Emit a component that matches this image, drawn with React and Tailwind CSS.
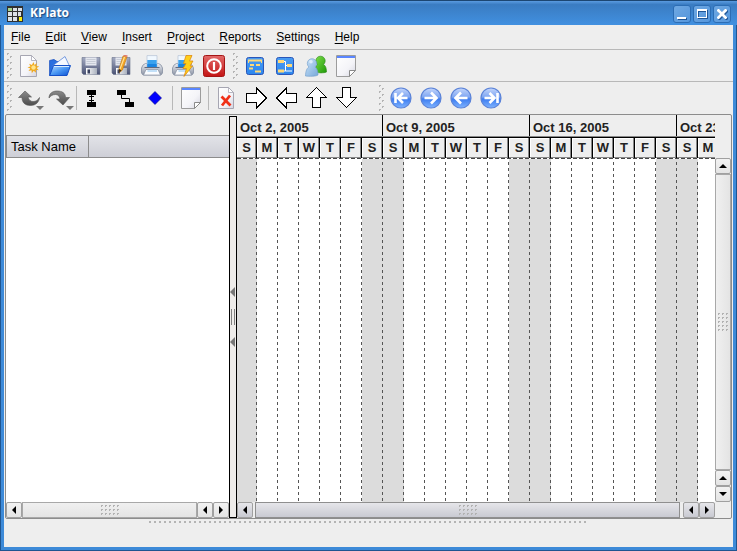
import React from "react";

const MENUS = ["File", "Edit", "View", "Insert", "Project", "Reports", "Settings", "Help"];

const DAYS = ["S", "M", "T", "W", "T", "F", "S"];

const WEEKS = [
  { label: "Oct 2, 2005", days: 7 },
  { label: "Oct 9, 2005", days: 7 },
  { label: "Oct 16, 2005", days: 7 },
  { label: "Oct 23, 2005", days: 2 },
];

/* ---------- icons ---------- */

function Icon({ children, size = "size-[22px]" }) {
  return (
    <svg viewBox="0 0 22 22" className={`${size} shrink-0`} aria-hidden="true">
      {children}
    </svg>
  );
}

function Gradients() {
  return (
    <svg className="absolute size-0" aria-hidden="true">
      <defs>
        <linearGradient id="paper" x1="0" y1="0" x2="1" y2="1">
          <stop offset="0" stopColor="#fff" />
          <stop offset=".6" stopColor="#f4f4f8" />
          <stop offset="1" stopColor="#d4d4e0" />
        </linearGradient>
        <linearGradient id="folder" x1="0" y1="0" x2="1" y2="1">
          <stop offset="0" stopColor="#b8dcff" />
          <stop offset=".5" stopColor="#4a98f4" />
          <stop offset="1" stopColor="#0a4fd0" />
        </linearGradient>
        <linearGradient id="disk" x1="0" y1="0" x2="0" y2="1">
          <stop offset="0" stopColor="#a4abc2" />
          <stop offset="1" stopColor="#4a5274" />
        </linearGradient>
        <linearGradient id="metal" x1="0" y1="0" x2="1" y2="0">
          <stop offset="0" stopColor="#fff" />
          <stop offset="1" stopColor="#a9b0bd" />
        </linearGradient>
        <linearGradient id="printer" x1="0" y1="0" x2="0" y2="1">
          <stop offset="0" stopColor="#eceef3" />
          <stop offset="1" stopColor="#8b93a4" />
        </linearGradient>
        <linearGradient id="red" x1="0" y1="0" x2="0" y2="1">
          <stop offset="0" stopColor="#e26a6a" />
          <stop offset="1" stopColor="#c41414" />
        </linearGradient>
        <linearGradient id="blueBox" x1="0" y1="0" x2="0" y2="1">
          <stop offset="0" stopColor="#4a9cf2" />
          <stop offset="1" stopColor="#2c86ee" />
        </linearGradient>
        <linearGradient id="ball" x1="0" y1="0" x2="0" y2="1">
          <stop offset="0" stopColor="#c4d6fb" />
          <stop offset=".45" stopColor="#7fa6f2" />
          <stop offset=".55" stopColor="#3d7cf0" />
          <stop offset="1" stopColor="#7fb4ff" />
        </linearGradient>
        <linearGradient id="green" x1="0" y1="0" x2="1" y2="1">
          <stop offset="0" stopColor="#7ede4a" />
          <stop offset="1" stopColor="#1f9a08" />
        </linearGradient>
        <linearGradient id="sky" x1="0" y1="0" x2="1" y2="1">
          <stop offset="0" stopColor="#c9e2f8" />
          <stop offset="1" stopColor="#78a9da" />
        </linearGradient>
        <linearGradient id="curl" x1="0" y1="0" x2="0" y2="1">
          <stop offset="0" stopColor="#8a8a8a" />
          <stop offset="1" stopColor="#4c4c4c" />
        </linearGradient>
      </defs>
    </svg>
  );
}

function NewIcon() {
  return (
    <Icon>
      <path d="M2.500 .5h11l5 5v16h-16z" fill="url(#paper)" stroke="#a6a6b2" />
      <path d="M13.500 .5v5h5z" fill="#fff" stroke="#a6a6b2" strokeWidth=".8" />
      <path d="M15.500 7l1 3 2.500-2-.8 3 3 .4-2.600 1.600 2.200 2.200-3-.4.200 3-2.300-2-1.900 2.400-.3-3-3 .8 1.800-2.500-2.800-1.300 3-.7-1.400-2.700 2.800 1.200z" fill="#f0a81c" />
      <circle cx="15.500" cy="12.500" r="2.200" fill="#ffe48a" />
    </Icon>
  );
}

function OpenIcon() {
  return (
    <Icon>
      <path d="M.6 20.500V5.500L5 4.500l3 2h3V19z" fill="#2a6fe0" stroke="#1a50c0" strokeWidth=".8" />
      <path d="M4 10.500L16 1.500l4 8.500v4H4z" fill="#f4f8ff" stroke="#5a86d8" strokeWidth=".8" />
      <path d="M4.500 10.500h17L18 20.500H.7z" fill="url(#folder)" stroke="#1450c8" />
      <path d="M5 11.500h15" stroke="#d8ecff" />
    </Icon>
  );
}

function Disk() {
  return (
    <>
      <path d="M2 2.500h18v17H3.500L2 18z" fill="url(#disk)" stroke="#6a728c" strokeWidth=".6" />
      <path d="M5.500 2.500h11v8h-11z" fill="#e4e7ef" />
      <path d="M6.500 4.500h9M6.500 6.500h9M6.500 8.500h9" stroke="#b9becb" strokeWidth=".7" />
      <path d="M6 13h11v6.500H6z" fill="url(#metal)" />
      <path d="M7.500 14.500h2.500v4H7.500z" fill="#39415f" />
    </>
  );
}

function SaveIcon() {
  return (
    <Icon>
      <Disk />
    </Icon>
  );
}

function SaveAsIcon() {
  return (
    <Icon>
      <Disk />
      <path d="M13 1l4 1-4.500 13-3 2.500-.5-4z" fill="#f4a524" stroke="#b9741a" strokeWidth=".6" />
      <path d="M14.500 2l-4.500 12" stroke="#ffe39a" strokeWidth="1.200" />
      <path d="M13.300 1l4 1 .4-1.500-3.600-1z" fill="#e27a6a" />
      <path d="M9 14l2.500 1.500-2.200 2z" fill="#3c2c1c" />
    </Icon>
  );
}

function Printer() {
  return (
    <>
      <path d="M2 10l2.500-1.500h13L20 10l1.500 3v5L20 20H2L.5 18v-5z" fill="url(#printer)" stroke="#8790a2" strokeWidth=".8" />
      <path d="M6 .6h10v11.400H6z" fill="#f0f8ff" stroke="#b4c2d4" strokeWidth=".7" />
      <path d="M6.300 5h9.400v7H6.300z" fill="#3aa2ee" />
      <path d="M6.300 9h9.400v3H6.300z" fill="#1a84e0" />
      <path d="M3.500 12.500h15" stroke="#5f6a80" />
      <path d="M5 14.500h12l2.500 5.500h-17z" fill="#fafcff" stroke="#8790a2" strokeWidth=".7" />
      <path d="M6.500 16h9.500" stroke="#9ccdf4" strokeWidth="1.200" />
    </>
  );
}

function PrintIcon() {
  return (
    <Icon>
      <Printer />
    </Icon>
  );
}

function QuickPrintIcon() {
  return (
    <Icon>
      <Printer />
      <path d="M14 .5h6L17.500 6H21l-3 5h2.500L12 21.500l2.500-8H11l3-5h-2.500z" fill="#ffcf1a" stroke="#e08a10" strokeWidth=".8" />
    </Icon>
  );
}

function QuitIcon() {
  return (
    <Icon>
      <rect x=".5" y=".5" width="21" height="21" rx="2" fill="url(#red)" stroke="#a51616" />
      <circle cx="11" cy="11" r="6.800" fill="none" stroke="#fff" strokeWidth="2" />
      <path d="M11 7v8" stroke="#fff" strokeWidth="2.200" />
    </Icon>
  );
}

function GanttIcon() {
  return (
    <Icon>
      <rect x="2.500" y="2.500" width="17" height="17" rx="2" fill="url(#blueBox)" stroke="#2a56b8" />
      <path d="M4 5.500h14M6 10h4M12 10h4M5 13.500h4M11 16.500h6" stroke="#ffd978" strokeWidth="2" />
      <path d="M4.500 5v3M17.500 5v3" stroke="#ffd978" />
    </Icon>
  );
}

function PertIcon() {
  return (
    <Icon>
      <rect x="2.500" y="2.500" width="17" height="17" rx="2" fill="url(#blueBox)" stroke="#2a56b8" />
      <path d="M4 6.500h6M13 10.500h5M4 16h6" stroke="#ffd978" strokeWidth="3" />
      <path d="M10 6.500h1.500v9.500H10M11.500 10.500H13M11.500 16H18" stroke="#fff" strokeWidth="1" fill="none" />
    </Icon>
  );
}

function PeopleIcon() {
  return (
    <Icon>
      <path d="M10 17c0-4 1-6.500 2.500-7.500a4.700 4.700 0 1 1 6 0c2 1 3 3.500 3 7.500-2.500 1.200-8 1.200-11.500 0z" fill="url(#green)" stroke="#2a8a18" strokeWidth=".6" />
      <path d="M.5 21c0-5 1.500-8 3.500-9a4.700 4.700 0 1 1 6 0c2 1 3 4 3 8-2 1.500-8.500 1.500-12.500 1z" fill="url(#sky)" stroke="#6d9aca" strokeWidth=".6" />
      <circle cx="6" cy="6.800" r="1.800" fill="#e8f4ff" opacity=".8" />
    </Icon>
  );
}

function NoteIcon() {
  return (
    <Icon>
      <path d="M1.500 .5h19v15l-6 6h-13z" fill="url(#paper)" stroke="#9c9c9c" />
      <path d="M2 1h18v2H2z" fill="#5a86ff" />
      <path d="M14.500 21.500v-6h6z" fill="#fff" stroke="#8a8a8a" />
    </Icon>
  );
}

function UndoIcon() {
  return (
    <Icon>
      <path d="M.5 10.500L7 4l6.500 6H10c.5 3 3 4.500 5 4.500 3 0 5-1.500 6.500-4-.5 5-4 8-9 8-5.500 0-8.500-3-8.500-8z" fill="url(#curl)" stroke="#555" strokeWidth=".6" />
    </Icon>
  );
}

function RedoIcon() {
  return (
    <Icon>
      <path d="M21.500 10.500L15 18l-6.500-6H12c-.5-3-2-4.500-4.500-4.500-3 0-5 1.500-6.500 3.500C1 6.500 4.500 4 9 4c5 0 8.500 2 8.500 6.500z" fill="url(#curl)" stroke="#555" strokeWidth=".6" />
    </Icon>
  );
}

function IndentLinkIcon() {
  return (
    <Icon>
      <path d="M4 3h9v5H4zM4 15h9v5H4z" fill="#000" />
      <path d="M8.500 7v9M6 9.500h5M6 13.500h5" stroke="#000" />
    </Icon>
  );
}

function LinkTasksIcon() {
  return (
    <Icon>
      <path d="M4 3h9v5H4zM12 15h9v5h-9z" fill="#000" />
      <path d="M8.500 8v3.500h8V16" stroke="#000" fill="none" />
    </Icon>
  );
}

function MilestoneIcon() {
  return (
    <Icon>
      <path d="M11 4.500l6.500 6.500-6.500 6.500L4.500 11z" fill="#00f" stroke="#000080" strokeWidth=".6" />
    </Icon>
  );
}

function DeleteIcon() {
  return (
    <Icon>
      <path d="M3.500 .5h10l5 5v16h-15z" fill="url(#paper)" stroke="#a6a6b2" />
      <path d="M13.500 .5v5h5z" fill="#fff" stroke="#a6a6b2" strokeWidth=".8" />
      <path d="M6.500 9.500l9 9M15 8.500l-8 10" stroke="#f03018" strokeWidth="2.800" />
    </Icon>
  );
}

const ARROWS = {
  right: "M.5 6.500h10v-5.500L20.500 11l-10 10v-5.500h-10z",
  left: "M20.500 6.500h-10v-5.500L.5 11l10 10v-5.500h10z",
  up: "M6.500 20.500v-10H.5L10.500 .5l10 10h-6v10z",
  down: "M6.500 .5v10H.5l10 10 10-10h-6V.5z",
};

function BlockArrow({ dir }) {
  return (
    <Icon>
      <path d={ARROWS[dir]} fill="#fff" stroke="#000" shapeRendering="crispEdges" />
    </Icon>
  );
}

const BALLS = {
  first: "M5.500 6v10M17.500 11H9M13 6l-5 5 5 5",
  next: "M4.500 11h11M11 5.500l5.500 5.500-5.500 5.500",
  prev: "M17.500 11h-11M11 5.500L5.500 11l5.500 5.500",
  last: "M17.500 6v10M4.500 11H13M9.500 6l5 5-5 5",
};

function BallIcon({ kind }) {
  return (
    <Icon>
      <circle cx="11" cy="11" r="10" fill="url(#ball)" stroke="#5b83d8" strokeWidth="1.200" />
      <path d={BALLS[kind]} fill="none" stroke="#fff" strokeWidth="2.600" />
    </Icon>
  );
}

/* ---------- small parts ---------- */

function Handle() {
  return (
    <svg className="h-[26px] w-1.5 shrink-0" viewBox="0 0 6 26" shapeRendering="crispEdges" aria-hidden="true">
      {[0, 6, 12, 18, 24].map((y) => (
        <path key={y} d={`M0 ${y}h2v1h-1v1h-1z`} fill="#b4b4b4" />
      ))}
      {[3, 9, 15, 21].map((y) => (
        <path key={y} d={`M3 ${y}h2v1h-1v1h-1z`} fill="#b4b4b4" />
      ))}
    </svg>
  );
}

function Tool({ label, children, wide, menu }) {
  return (
    <button
      type="button"
      aria-label={label}
      className={`relative flex h-7 shrink-0 items-center justify-center ${wide ? "w-[31px]" : "w-[30px]"}`}
    >
      {children}
      {menu && (
        <svg viewBox="0 0 8 4" className="absolute right-0 bottom-0.5 h-1 w-2" aria-hidden="true">
          <path d="M0 0h8L4 4z" fill="#777" />
        </svg>
      )}
    </button>
  );
}

function Separator() {
  return <div className="mx-0.5 h-6 w-px shrink-0 bg-[#b8b8b8]" />;
}

const TRIANGLES = {
  left: "M6 0v8L2 4z",
  right: "M2 0v8l4-4z",
  up: "M0 6h8L4 2z",
  down: "M0 2h8L4 6z",
};

function ScrollButton({ dir, label, active }) {
  return (
    <button
      type="button"
      aria-label={label}
      className={`flex size-4 shrink-0 items-center justify-center rounded-xs border border-[#a0a0a0] bg-linear-to-b ${
        active ? "from-[#e6e6ea] to-[#c9cad2]" : "from-[#f2f2f2] to-[#e4e4e4]"
      }`}
    >
      <svg viewBox="0 0 8 8" className="size-2" aria-hidden="true">
        <path d={TRIANGLES[dir]} fill="#000" />
      </svg>
    </button>
  );
}

function Grip({ tall }) {
  const cols = tall ? [0, 4, 8] : [0, 4, 8, 12, 16];
  const rows = tall ? [0, 4, 8, 12, 16] : [0, 4, 8];
  return (
    <svg
      viewBox={tall ? "0 0 10 18" : "0 0 18 10"}
      className={tall ? "h-[18px] w-2.5" : "h-2.5 w-[18px]"}
      shapeRendering="crispEdges"
      aria-hidden="true"
    >
      {cols.map((x) =>
        rows.map((y) => (
          <path key={`${x}-${y}`} d={`M${x} ${y}h2v1h-1v1h-1z`} fill="#b2b2b2" />
        ))
      )}
    </svg>
  );
}

const dayWidth = (week, day) => (week === 0 && day === 0 ? "w-5" : "w-[21px]");

/* ---------- panels ---------- */

function TitleBar() {
  return (
    <header className="flex h-[25px] shrink-0 items-center border-t border-[#1c4672] bg-linear-to-b from-[#5a9be0] via-[#3a7cc2] via-15% to-[#4190e0] pr-1.5 pl-1">
      <svg viewBox="0 0 16 16" className="mt-0.5 ml-[3px] size-4" shapeRendering="crispEdges" aria-hidden="true">
        <path d="M0 0h16v16H0z" fill="#303030" />
        <path d="M1 2h4v3H1z" fill="#a9d68c" />
        <path d="M6 2h4v3H6zM11 2h4v3h-4zM1 6h4v4H1zM6 6h4v4H6zM11 6h3v4h-3zM1 11h4v4H1zM6 11h4v4H6z" fill="#dde2e8" />
        <path d="M12 11h3v4h-3z" fill="#f8ee10" />
      </svg>
      <h1 className="ml-[7px] flex-1 font-['Open_Sans',sans-serif] text-[12px] font-bold text-white [text-shadow:1px_1px_1px_#1d4a80]">
        KPlato
      </h1>
      <div className="mt-0.5 flex gap-0.5">
        {[
          ["Minimize", "M4 12h9v2H4z"],
          ["Maximize", "M4 4h10v9H4zM5 6v6h8V6z"],
          ["Close", "M4 5l1-1h1l3 3 3-3h1l1 1v1l-3 3 3 3v1l-1 1h-1l-3-3-3 3H5l-1-1v-1l3-3-3-3z"],
        ].map(([label, d]) => (
          <button
            key={label}
            type="button"
            aria-label={label}
            className="size-[18px] rounded-[3px] border border-[#2c6db4] bg-linear-to-br from-[#6fa8e2] to-[#5596dc]"
          >
            <svg viewBox="1 1 16 16" className="size-4" aria-hidden="true">
              <path d={d} fill="#1f5596" fillRule="evenodd" transform="translate(1 1)" />
              <path d={d} fill="#fff" fillRule="evenodd" />
            </svg>
          </button>
        ))}
      </div>
    </header>
  );
}

function MenuBar() {
  return (
    <nav className="flex h-[25px] shrink-0 items-center gap-[15px] border-b border-[#b8b8b8] pl-[7px] text-[12px]">
      {MENUS.map((name) => (
        <button key={name} type="button">
          <span className="underline underline-offset-2">{name[0]}</span>
          {name.slice(1)}
        </button>
      ))}
    </nav>
  );
}

function MainToolbar() {
  return (
    <div className="flex h-8 shrink-0 items-center border-b border-[#b8b8b8] pl-[3px]">
      <Handle />
      <div className="flex">
        <Tool wide label="New"><NewIcon /></Tool>
        <Tool wide label="Open"><OpenIcon /></Tool>
        <Tool wide label="Save"><SaveIcon /></Tool>
        <Tool label="Save As"><SaveAsIcon /></Tool>
        <Tool wide label="Print"><PrintIcon /></Tool>
        <Tool wide label="Print Preview"><QuickPrintIcon /></Tool>
        <Tool wide label="Quit"><QuitIcon /></Tool>
      </div>
      <div className="ml-1 flex items-center">
        <Handle />
        <Tool wide label="Gantt"><GanttIcon /></Tool>
        <Tool label="Network"><PertIcon /></Tool>
        <Tool wide label="Resources"><PeopleIcon /></Tool>
        <Tool label="Accounts"><NoteIcon /></Tool>
      </div>
    </div>
  );
}

function EditToolbar() {
  return (
    <div className="flex h-8 shrink-0 items-center pl-[3px]">
      <Handle />
      <div className="ml-px flex items-center">
        <Tool menu label="Undo"><UndoIcon /></Tool>
        <Tool menu label="Redo"><RedoIcon /></Tool>
        <Separator />
        <Tool label="Add Subtask"><IndentLinkIcon /></Tool>
        <Tool label="Add Task"><LinkTasksIcon /></Tool>
        <Tool wide label="Add Milestone"><MilestoneIcon /></Tool>
        <Separator />
        <Tool wide label="Edit"><NoteIcon /></Tool>
        <Separator />
        <Tool label="Delete"><DeleteIcon /></Tool>
        <Tool wide label="Indent"><BlockArrow dir="right" /></Tool>
        <Tool label="Unindent"><BlockArrow dir="left" /></Tool>
        <Tool label="Move Up"><BlockArrow dir="up" /></Tool>
        <Tool label="Move Down"><BlockArrow dir="down" /></Tool>
      </div>
      <div className="ml-[17px] flex items-center">
        <Handle />
        <Tool wide label="First"><BallIcon kind="first" /></Tool>
        <Tool label="Forward"><BallIcon kind="next" /></Tool>
        <Tool label="Back"><BallIcon kind="prev" /></Tool>
        <Tool label="Last"><BallIcon kind="last" /></Tool>
      </div>
    </div>
  );
}

function TaskPane() {
  return (
    <section className="flex w-[223px] shrink-0 flex-col">
      <div className="h-5 shrink-0" />
      <div className="flex-1 bg-white">
        <table className="w-full border-collapse">
          <thead>
            <tr className="h-[22px] bg-linear-to-b from-[#e2e3e8] to-[#cdced6]">
              <th className="w-[82px] border border-[#8c8c8c] p-0 text-left text-[13px] leading-5 font-normal whitespace-nowrap">
                <span className="pl-1">Task Name</span>
              </th>
              <td className="border-y border-[#8c8c8c] p-0" />
            </tr>
          </thead>
        </table>
      </div>
      <div className="flex h-4 shrink-0">
        <ScrollButton dir="left" label="Scroll left" />
        <div className="flex flex-1 items-center justify-center border border-[#a8a8a8] bg-linear-to-b from-[#f0f0f0] to-[#e4e4e4]">
          <Grip />
        </div>
        <ScrollButton dir="left" label="Scroll left" />
        <ScrollButton dir="right" label="Scroll right" />
      </div>
    </section>
  );
}

function Splitter() {
  return (
    <div className="mt-px flex w-2 shrink-0 flex-col items-start justify-center gap-3 border border-black bg-[#eeecea]">
      <svg viewBox="0 0 5 10" className="h-2.5 w-[5px]" aria-hidden="true">
        <path d="M5 0v10L0 5z" fill="#777" />
      </svg>
      <div className="ml-px h-4 w-1 border-x border-[#808080]" />
      <svg viewBox="0 0 5 10" className="h-2.5 w-[5px]" aria-hidden="true">
        <path d="M5 0v10L0 5z" fill="#777" />
      </svg>
    </div>
  );
}

function WeekHeader({ week, index }) {
  const last = index === WEEKS.length - 1;
  return (
    <div className={last ? "w-0 flex-1" : "shrink-0"}>
      <div
        className={`flex h-[22px] items-center overflow-hidden border-[#000] pt-[3px] pl-[3px] text-[13px] font-bold whitespace-nowrap text-[#222] ${
          last ? "" : "border-r"
        }`}
      >
        {week.label}
      </div>
      <div className="flex h-[22px] border-t border-b border-black shadow-[0_-1px_0_#888]">
        {DAYS.slice(0, week.days).map((day, d) => (
          <div
            key={d}
            className={`flex shrink-0 items-center justify-center border-r border-black text-[13px] font-bold text-[#222] shadow-[inset_-1px_-1px_0_#888,inset_1px_1px_0_#fff] ${dayWidth(index, d)}`}
          >
            {day}
          </div>
        ))}
      </div>
    </div>
  );
}

function GanttPane() {
  return (
    <section className="flex min-w-0 flex-1">
      <div className="flex min-w-0 flex-1 flex-col">
        <div className="flex h-[43px] shrink-0 overflow-hidden">
          {WEEKS.map((week, i) => (
            <WeekHeader key={week.label} week={week} index={i} />
          ))}
        </div>
        <div className="flex flex-1 flex-col overflow-hidden bg-white">
          <div className="flex flex-1 bg-[repeating-linear-gradient(90deg,#444_0_4px,transparent_4px_6px)] bg-size-[100%_1px] bg-no-repeat">
            {WEEKS.map((week, i) =>
              DAYS.slice(0, week.days).map((day, d) => (
                <div
                  key={`${i}-${d}`}
                  className={`mt-px flex shrink-0 justify-end ${day === "S" ? "bg-[#dcdcdc]" : ""} ${dayWidth(i, d)}`}
                >
                  <div className="w-px bg-[repeating-linear-gradient(180deg,transparent_0_3px,#555_3px_6px)]" />
                </div>
              ))
            )}
          </div>
        </div>
        <div className="flex h-4 shrink-0">
          <ScrollButton active dir="left" label="Scroll left" />
          <div className="flex flex-1 px-0.5">
            <div className="mr-px flex flex-1 items-center justify-center border border-[#8f8f8f] bg-linear-to-b from-[#e6e6ea] to-[#c9cad2]">
              <Grip />
            </div>
          </div>
          <ScrollButton active dir="left" label="Scroll left" />
          <ScrollButton active dir="right" label="Scroll right" />
        </div>
      </div>
      <div className="flex w-4 shrink-0 flex-col pt-[43px] pb-4">
        <ScrollButton dir="up" label="Scroll up" />
        <div className="flex flex-1 items-center justify-center border border-[#a8a8a8] bg-linear-to-r from-[#f0f0f0] to-[#e4e4e4]">
          <Grip tall />
        </div>
        <ScrollButton dir="up" label="Scroll up" />
        <ScrollButton dir="down" label="Scroll down" />
      </div>
    </section>
  );
}

export default function App() {
  return (
    <div className="flex h-screen flex-col overflow-hidden bg-[#3d8ad8] font-['Liberation_Sans',Arial,sans-serif] text-black">
      <Gradients />
      <TitleBar />
      <div className="flex min-h-0 flex-1 flex-col border-x border-b border-[#1f5590]">
        <div className="mr-[3px] mb-[3px] ml-[3px] flex min-h-0 flex-1 flex-col bg-[#eeeeee]">
          <MenuBar />
          <MainToolbar />
          <EditToolbar />
          <main className="mx-px flex min-h-0 flex-1 rounded-xs border border-[#8c8c8c]">
            <TaskPane />
            <Splitter />
            <GanttPane />
          </main>
          <footer className="flex h-7 shrink-0 justify-center pt-0.5">
            <div className="h-1 w-[440px] bg-[linear-gradient(#b4b4b4,#b4b4b4)] mask-[linear-gradient(90deg,#000_2px,transparent_2px)] mask-size-[5px_2px] mask-repeat-x" />
          </footer>
        </div>
      </div>
    </div>
  );
}
